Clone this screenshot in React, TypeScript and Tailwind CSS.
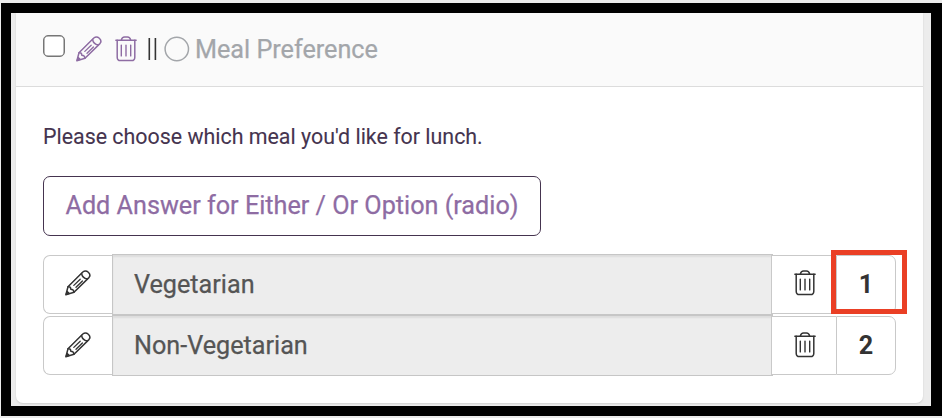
import React from 'react';

type IconProps = {
  className?: string;
}

const PencilIcon: React.FC<IconProps> = ({ className }) => (
  <svg viewBox="0 0 26 26" fill="none" stroke="currentColor" strokeWidth="1.5" strokeLinejoin="round" strokeLinecap="round" className={className}>
    <path d="M.9 24.7 3 16.7 17.8 2Q20.6-.2 23.3 2.2 26.2 4.9 23.9 7.6L9 22.3Z" />
    <path d="M3 16.7Q5.7 16.3 5.8 19.3Q8.8 19.4 9 22.3" />
    <path d="M16.6 3.4Q17.2 8.2 22.4 9" />
    <path d="M8.8 15.4 15.2 9.3M11 17.2 17.4 11" strokeWidth="1.3" />
    <path d="M1.3 24.2 2.2 21.5 4 23.3Z" fill="currentColor" />
  </svg>
);

const TrashIcon: React.FC<IconProps> = ({ className }) => (
  <svg viewBox="0 0 22 26" fill="none" stroke="currentColor" strokeWidth="1.5" strokeLinecap="round" className={className}>
    <path d="M.9 4.3H21.1" />
    <path d="M6.4 4Q7 1.1 9.5 1.1H12.5Q15 1.1 15.6 4" />
    <path d="M2.2 4.3V21.2Q2.2 24.6 5.5 24.6H16.5Q19.8 24.6 19.8 21.2V4.3" />
    <path d="M6.3 9.1V19.9M11 9.1V19.9M15.7 9.1V19.9" strokeWidth="1.4" />
  </svg>
);

type AnswerProps = {
  label: string;
  order: number;
  highlighted?: boolean;
}

const AnswerRow: React.FC<AnswerProps> = ({ label, order, highlighted }) => (
  <div className="group relative flex h-[61px] items-center text-[#333]">
    <button className="flex h-[59px] w-[69px] shrink-0 items-center justify-center rounded-l-[7px] border border-r-0 border-[#c9c9c9] bg-white">
      <PencilIcon className="mb-[3px] h-[26px] w-[26px] group-last:mb-px" />
    </button>
    <div className="flex h-[61px] w-[661px] shrink-0 items-center border border-[#c6c6c6] bg-[#ededed] pl-[21px] text-[25.2px] leading-none text-[#555] shadow-[inset_0_2px_2px_rgba(0,0,0,0.07)]">
      {label}
    </div>
    <button className="-ml-0.5 flex h-[59px] w-[65px] shrink-0 items-center justify-center border border-r-0 border-[#c9c9c9] bg-white pl-0.5">
      <TrashIcon className="mb-[3px] h-[26px] w-[22px] group-last:mb-px" />
    </button>
    <div className="flex h-[59px] w-[60px] shrink-0 items-center justify-center rounded-r-[7px] border border-[#c9c9c9] bg-white text-[25.2px] font-bold leading-none [-webkit-text-stroke:0px]">
      {order}
    </div>
    {highlighted && (
      <div className="absolute -top-1 left-[788px] z-10 h-16 w-[76px] border-[5px] border-[#ea3f25]" />
    )}
  </div>
);

const answers = [
  { label: 'Vegetarian', order: 1, highlighted: true },
  { label: 'Non-Vegetarian', order: 2 }
];

const App: React.FC = () => (
  <div className="h-[418px] w-[942px] overflow-hidden bg-[#ebebeb] pl-px pt-[3px] font-['Roboto',sans-serif] [-webkit-text-stroke:0.25px]">
    <div className="h-[413px] w-[941px] border-[10px] border-r-[11px] border-black bg-[#ececec] pl-[5px]">
      <div className="h-[390px] w-[907px] overflow-hidden rounded-b-[7px] bg-white shadow-[0_1px_2px_rgba(0,0,0,0.12)]">
        <div className="flex h-[74px] items-center border-b border-[#dcdcdc] bg-[#fafafa] pl-[27px] text-[#8e6ca3]">
          <span className="mb-[7px] h-[22px] w-[22px] rounded-[5px] border-[1.5px] border-[#767676] bg-white shadow-[inset_0_0_0_0.5px_#767676]" />
          <PencilIcon className="ml-[11px] mb-0.5 h-[26px] w-[26px]" />
          <TrashIcon className="ml-[13px] mb-0.5 h-[26px] w-[22px]" />
          <svg viewBox="0 0 9 22" className="ml-[11px] mb-0.5 h-[22px] w-[9px] text-[#333]" stroke="currentColor" strokeWidth="1.6">
            <path d="M1.3 0V22M7.4 0V22" />
          </svg>
          <svg viewBox="0 0 26 26" className="ml-[7px] mb-0.5 h-[26px] w-[26px] text-[#a3a6aa]" fill="none" stroke="currentColor" strokeWidth="1.5">
            <circle cx="12.8" cy="13" r="11.7" />
          </svg>
          <span className="ml-[5px] text-[25.2px] leading-none text-[#a3a6aa]">Meal Preference</span>
        </div>

        <div className="px-[27px] pt-9">
          <p className="text-[21.4px] leading-7 text-[#45344f] [-webkit-text-stroke:0.1px]">Please choose which meal you'd like for lunch.</p>
          <button className="mt-[25px] flex h-[60px] w-[498px] items-center justify-center rounded-[7px] border border-[#45344f] text-[25.2px] leading-none text-[#8e6ca3]">
            Add Answer for Either / Or Option (radio)
          </button>
          <div className="mt-[18px]">
            {answers.map((answer) => (
              <AnswerRow key={answer.order} {...answer} />
            ))}
          </div>
        </div>
      </div>
    </div>
  </div>
);

export default App;
